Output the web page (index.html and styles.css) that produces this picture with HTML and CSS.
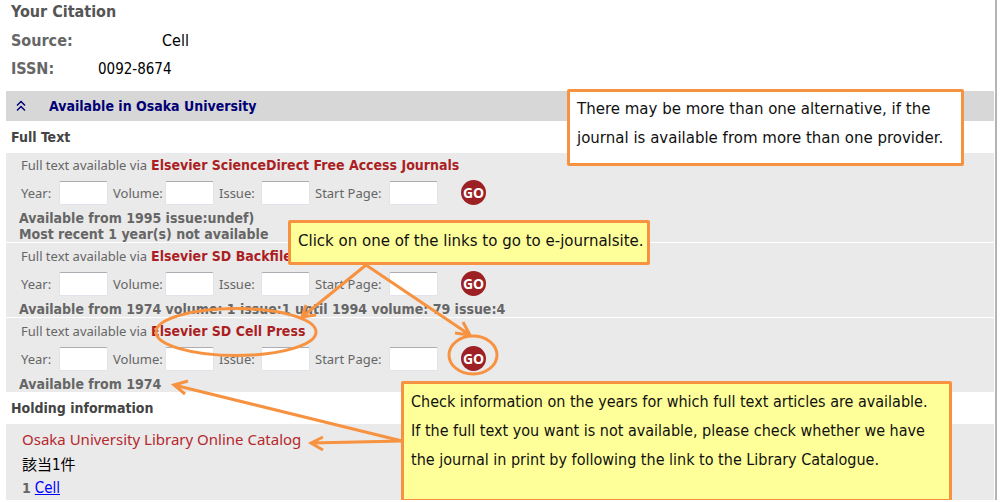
FILE: index.html
```html
<!DOCTYPE html>
<html lang="en">
<head>
    <meta charset="UTF-8">
    <meta name="viewport" content="width=device-width, initial-scale=1.0">
    <title>Your Citation</title>
    <link rel="stylesheet" href="styles.css">
</head>
<body>
    <main class="page">
        <h1 class="title">Your Citation</h1>
        <dl class="citation">
            <div class="citation-row source">
                <dt>Source:</dt>
                <dd>Cell</dd>
            </div>
            <div class="citation-row issn">
                <dt>ISSN:</dt>
                <dd>0092-8674</dd>
            </div>
        </dl>

        <h2 class="bar">
            <svg class="chevrons" viewBox="0 0 10 12" aria-hidden="true">
                <path d="M1 5.5 L5 1.5 L9 5.5 M1 10.5 L5 6.5 L9 10.5"/>
            </svg>
            Available in Osaka University
        </h2>

        <h3 class="section">Full Text</h3>
        <section class="service">
            <p class="via">Full text available via <a href="#">Elsevier ScienceDirect Free Access Journals</a></p>
            <form class="fields">
                <label>Year: <input type="text" name="year"></label>
                <label>Volume: <input type="text" name="volume"></label>
                <label>Issue: <input type="text" name="issue"></label>
                <label>Start Page: <input type="text" name="page"></label>
                <button type="button" class="go">GO</button>
            </form>
            <p class="note">Available from 1995 issue:undef)<br>Most recent 1 year(s) not available</p>
        </section>
        <section class="service">
            <p class="via">Full text available via <a href="#">Elsevier SD Backfile</a></p>
            <form class="fields">
                <label>Year: <input type="text" name="year"></label>
                <label>Volume: <input type="text" name="volume"></label>
                <label>Issue: <input type="text" name="issue"></label>
                <label>Start Page: <input type="text" name="page"></label>
                <button type="button" class="go">GO</button>
            </form>
            <p class="note">Available from 1974 volume: 1 issue:1 until 1994 volume: 79 issue:4</p>
        </section>
        <section class="service">
            <p class="via">Full text available via <a href="#">Elsevier SD Cell Press</a></p>
            <form class="fields">
                <label>Year: <input type="text" name="year"></label>
                <label>Volume: <input type="text" name="volume"></label>
                <label>Issue: <input type="text" name="issue"></label>
                <label>Start Page: <input type="text" name="page"></label>
                <button type="button" class="go">GO</button>
            </form>
            <p class="note">Available from 1974</p>
        </section>

        <h3 class="section">Holding information</h3>
        <section class="holding">
            <a class="catalog" href="#">Osaka University Library Online Catalog</a>
            <p class="hits" lang="ja">該当1件</p>
            <p class="hit"><b>1</b> <a href="#">Cell</a></p>
        </section>
    </main>

    <!-- arrows and rings over the page -->
    <svg class="marks" width="560" height="502" viewBox="0 0 560 502" aria-hidden="true">
        <ellipse cx="236" cy="332" rx="80" ry="23.5"/>
        <ellipse cx="473" cy="355" rx="24" ry="19"/>
        <path d="M366 265 L302 317 M306 305 L302 317 L316 315"/>
        <path d="M366 265 L470 335 M463 322 L470 335 L455 333"/>
        <path d="M402 441 L174 385 M188 381 L174 385 L185 394"/>
        <path d="M402 441 L311 443 M323 437 L311 443 L323 450"/>
    </svg>
    <aside class="callout plain">There may be more than one alternative, if the<br>journal is available from more than one provider.</aside>
    <aside class="callout links">Click on one of the links to go to e-journalsite.</aside>
    <aside class="callout years">Check information on the years for which full text articles are available.<br>If the full text you want is not available, please check whether we have<br>the journal in print by following the link to the Library Catalogue.</aside>
</body>
</html>
```

FILE: styles.css
```css
body {
    margin: 0;
    position: relative;
    background-color: #fff;
    color: #666;
    font-family: "DejaVu Sans Condensed", "Noto Sans CJK JP", sans-serif;
    font-size: 14px;
    line-height: 16px;
}
h1, h2, h3, p, dl, dd {
    margin: 0;
}
.page {
    margin-right: 3px;
    padding: 0 1px 0 6px;
    border-right: 2px solid #b4b4b4;
}
.title {
    padding: 2px 5px 0;
    font-size: 16px;
    line-height: 20px;
    color: #555;
}
.citation {
    padding: 5px 5px 8px;
    line-height: 28px;
}
.citation-row {
    display: grid;
    grid-template-columns: 87px auto;
}
.source {
    grid-template-columns: 151px auto;
}
.citation dt {
    font-size: 16px;
    font-weight: bold;
}
.citation dd {
    color: #000;
    font-size: 16px;
}
.issn dd {
    font-size: 15px;
}
.bar {
    display: flex;
    align-items: center;
    gap: 23px;
    padding: 0 10px;
    background-color: #d7d7d7;
    color: #000075;
    font-size: 14px;
    line-height: 30px;
}
.chevrons {
    width: 10px;
    height: 12px;
    fill: none;
    stroke: #000075;
    stroke-width: 1.5;
}
.section {
    padding: 0 5px;
    font-size: 14px;
    line-height: 32px;
    color: #444;
}
.service {
    padding: 2px 16px 0 15px;
    background-color: #eaeaea;
}
.service + .service {
    padding-top: 3px;
    border-top: 1px solid #fff;
}
.via {
    display: flex;
    align-items: center;
    gap: 4px;
    height: 20px;
    font-family: "Noto Sans", sans-serif;
    font-size: 13px;
}
.via a {
    color: #ab1f24;
    font-family: "DejaVu Sans Condensed", sans-serif;
    font-size: 14px;
    font-weight: bold;
    text-decoration: none;
}
.fields {
    display: grid;
    grid-template-columns: 87px 101px 91px 123px auto;
    justify-content: start;
    align-items: center;
    column-gap: 5px;
    height: 24px;
    margin: 5px 0 6px;
}
.fields label {
    display: flex;
    align-items: center;
    justify-content: space-between;
    font-family: "Noto Sans", sans-serif;
    font-size: 13px;
    white-space: nowrap;
}
.fields input {
    box-sizing: border-box;
    width: 49px;
    height: 24px;
    border: 1px solid #e2e3ea;
    border-top-color: #abadb3;
    border-radius: 2px;
    background-color: #fff;
    font: inherit;
}
.go {
    width: 25px;
    height: 25px;
    margin-left: 18px;
    padding: 0;
    border: 0;
    border-radius: 50%;
    background-color: #9c2024;
    color: #fff;
    font: bold 14px "Noto Sans", sans-serif;
}
.note {
    margin: 0 -2px;
    font-weight: bold;
}
.holding {
    padding: 4px 16px 1px;
    background-color: #eaeaea;
    line-height: 22px;
}
.catalog {
    display: block;
    color: #b5282e;
    font-family: "Noto Sans", sans-serif;
    font-size: 15px;
    line-height: 22px;
    text-decoration: none;
}
.hits {
    padding: 4px 0 1px;
    color: #000;
    font-size: 15px;
}
.hit a {
    color: #00f;
    font-size: 15px;
}
.marks {
    position: absolute;
    top: 0;
    left: 0;
    fill: none;
    stroke: #f79240;
    stroke-width: 3;
}
.callout {
    position: absolute;
    box-sizing: border-box;
    border: 3px solid #f79240;
    border-radius: 2px;
    background-color: #ffff99;
    color: #111;
    font-family: "DejaVu Sans", sans-serif;
    font-size: 15px;
    line-height: 29px;
    white-space: nowrap;
}
.plain {
    top: 89px;
    left: 567px;
    width: 397px;
    padding: 3px 7px 10px;
    background-color: #fff;
}
.links {
    top: 220px;
    left: 288px;
    width: 362px;
    padding: 4px 7px 6px;
}
.years {
    top: 381px;
    left: 401px;
    width: 551px;
    padding: 3px 7px 25px;
    font-family: "DejaVu Sans Condensed", sans-serif;
    font-size: 16px;
}
```
